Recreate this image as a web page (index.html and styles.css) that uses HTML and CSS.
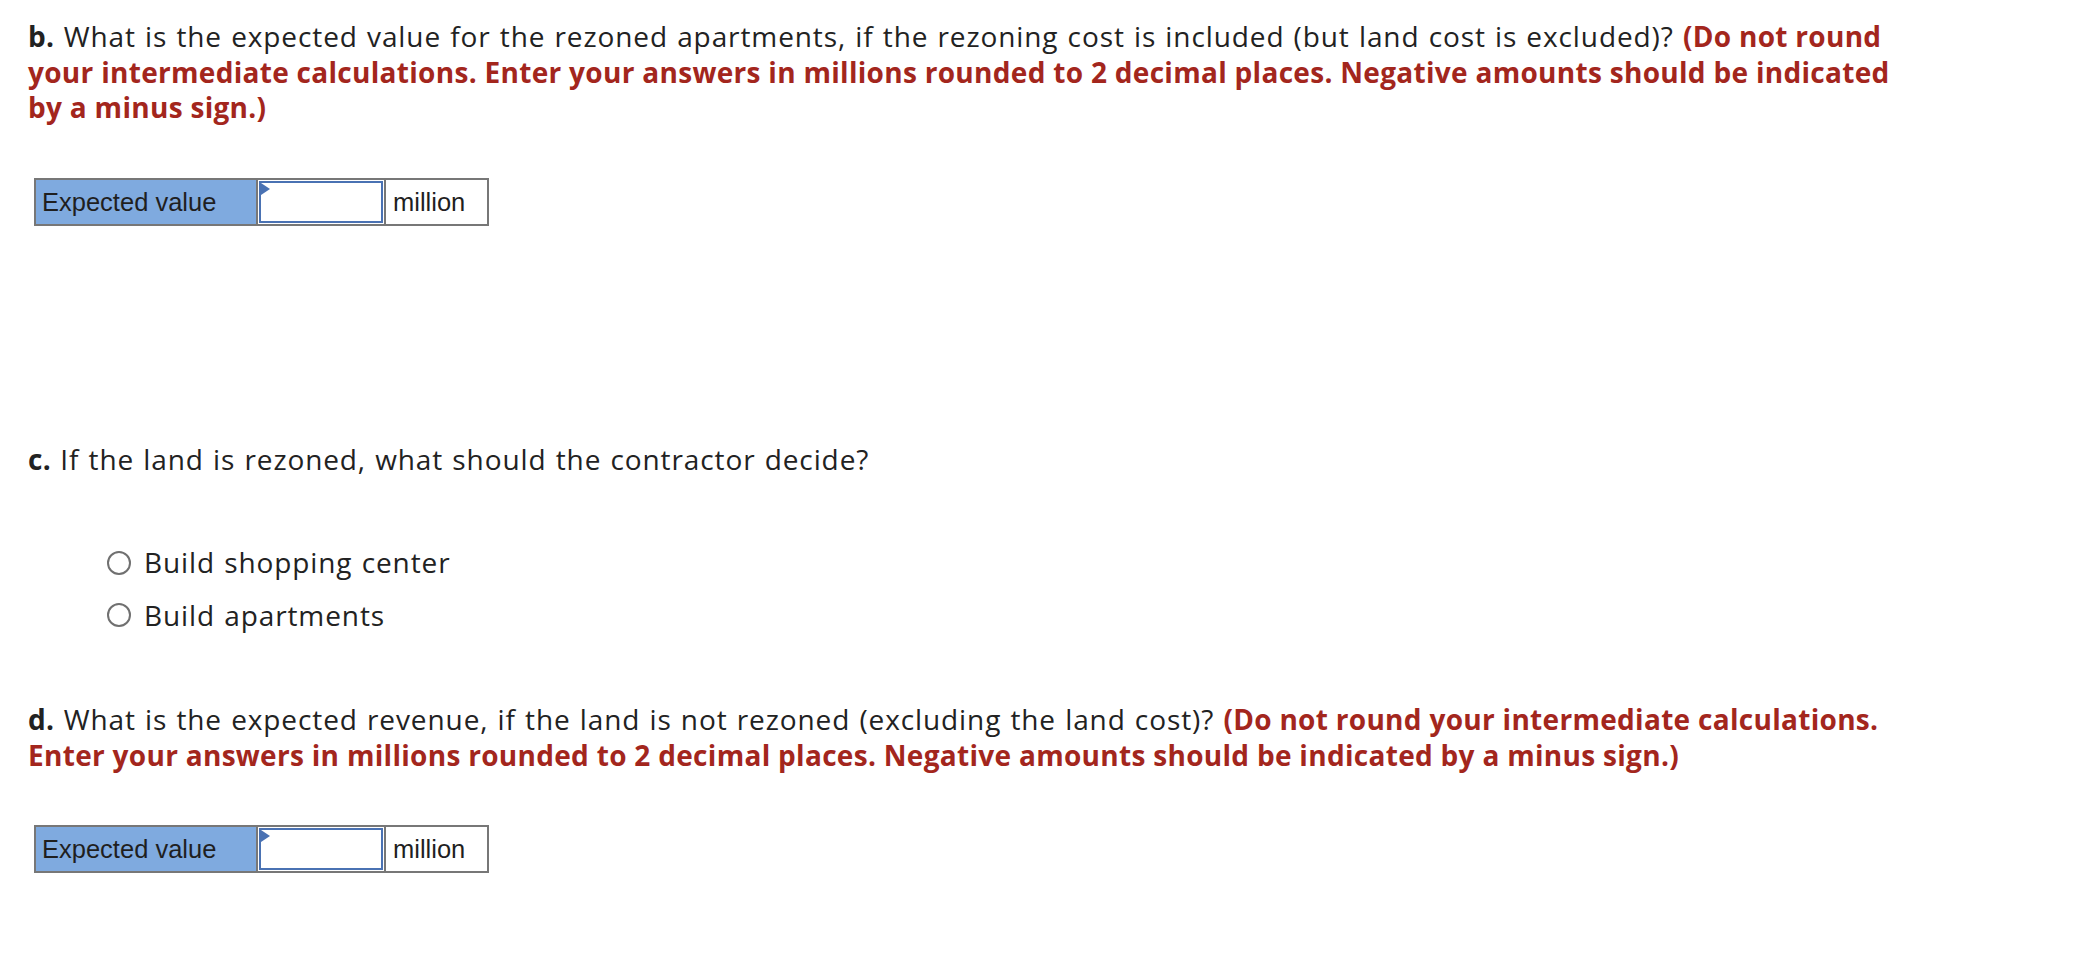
FILE: index.html
```html
<!DOCTYPE html>
<html>
<head>
<meta charset="utf-8">
<link rel="stylesheet" href="styles.css">
</head>
<body>
<div class="page">
  <section class="part part-b">
    <p class="prompt"><b class="letter">b.</b> What is the expected value for the rezoned apartments, if the rezoning cost is included (but land cost is excluded)? <strong class="note">(Do not round your intermediate calculations. Enter your answers in millions rounded to 2 decimal places. Negative amounts should be indicated by a minus sign.)</strong></p>
    <table class="answer">
      <tr>
        <td class="label">Expected value</td>
        <td class="entry"><div class="field"><span class="flag"></span></div></td>
        <td class="unit">million</td>
      </tr>
    </table>
  </section>

  <section class="part part-c">
    <p class="prompt"><b class="letter">c.</b> If the land is rezoned, what should the contractor decide?</p>
    <div class="choices">
      <label class="choice"><span class="radio"></span>Build shopping center</label>
      <label class="choice"><span class="radio"></span>Build apartments</label>
    </div>
  </section>

  <section class="part part-d">
    <p class="prompt"><b class="letter">d.</b> What is the expected revenue, if the land is not rezoned (excluding the land cost)? <strong class="note">(Do not round your intermediate calculations. Enter your answers in millions rounded to 2 decimal places. Negative amounts should be indicated by a minus sign.)</strong></p>
    <table class="answer">
      <tr>
        <td class="label">Expected value</td>
        <td class="entry"><div class="field"><span class="flag"></span></div></td>
        <td class="unit">million</td>
      </tr>
    </table>
  </section>
</div>
</body>
</html>
```

FILE: styles.css
```css
html, body {
  margin: 0;
  padding: 0;
  background: #ffffff;
}

.page {
  padding: 19px 0 0 28px;
  width: 1893px;
  font-family: "Open Sans", Lato, sans-serif;
  font-size: 28px;
  line-height: 35.5px;
  letter-spacing: 0.9px;
  word-spacing: 1px;
  color: #222222;
}

.prompt {
  margin: 0;
}

.letter {
  font-weight: 700;
  color: #222222;
  letter-spacing: 0.4px;
}

.note {
  font-weight: 700;
  color: #a3261d;
  letter-spacing: 0.3px;
  word-spacing: 0;
}

.answer {
  border-collapse: collapse;
  margin-left: 6px;
  font-family: "Liberation Sans", Arial, sans-serif;
  font-size: 25.5px;
  line-height: 30px;
  letter-spacing: 0;
  word-spacing: 0;
  color: #1f1f1f;
}

.part-b .answer {
  margin-top: 52px;
}

.answer td {
  border: 2px solid #777777;
  height: 42px;
  padding: 0;
  vertical-align: middle;
}

.answer .label {
  width: 214px;
  background: #7faadf;
  padding-left: 6px;
}

.answer .entry {
  width: 124px;
  padding: 1px;
  background: #ffffff;
}

.field {
  position: relative;
  height: 38px;
  border: 2px solid #4a72b3;
  background: #ffffff;
}

.flag {
  position: absolute;
  top: 0;
  left: 0;
  width: 0;
  height: 0;
  border-top: 6px solid transparent;
  border-bottom: 6px solid transparent;
  border-left: 9px solid #4a72b3;
}

.answer .unit {
  width: 94px;
  padding-left: 7px;
  background: #ffffff;
}

.part-c {
  margin-top: 216px;
}

.choices {
  display: flex;
  flex-direction: column;
  gap: 17px;
  margin-top: 68px;
  padding-left: 79px;
}

.choice {
  display: flex;
  align-items: center;
  gap: 13px;
}

.radio {
  width: 24px;
  height: 24px;
  border: 2px solid #707070;
  border-radius: 50%;
  box-sizing: border-box;
  flex: none;
}

.part-d {
  margin-top: 69px;
}

.part-d .answer {
  margin-top: 52px;
}
```
